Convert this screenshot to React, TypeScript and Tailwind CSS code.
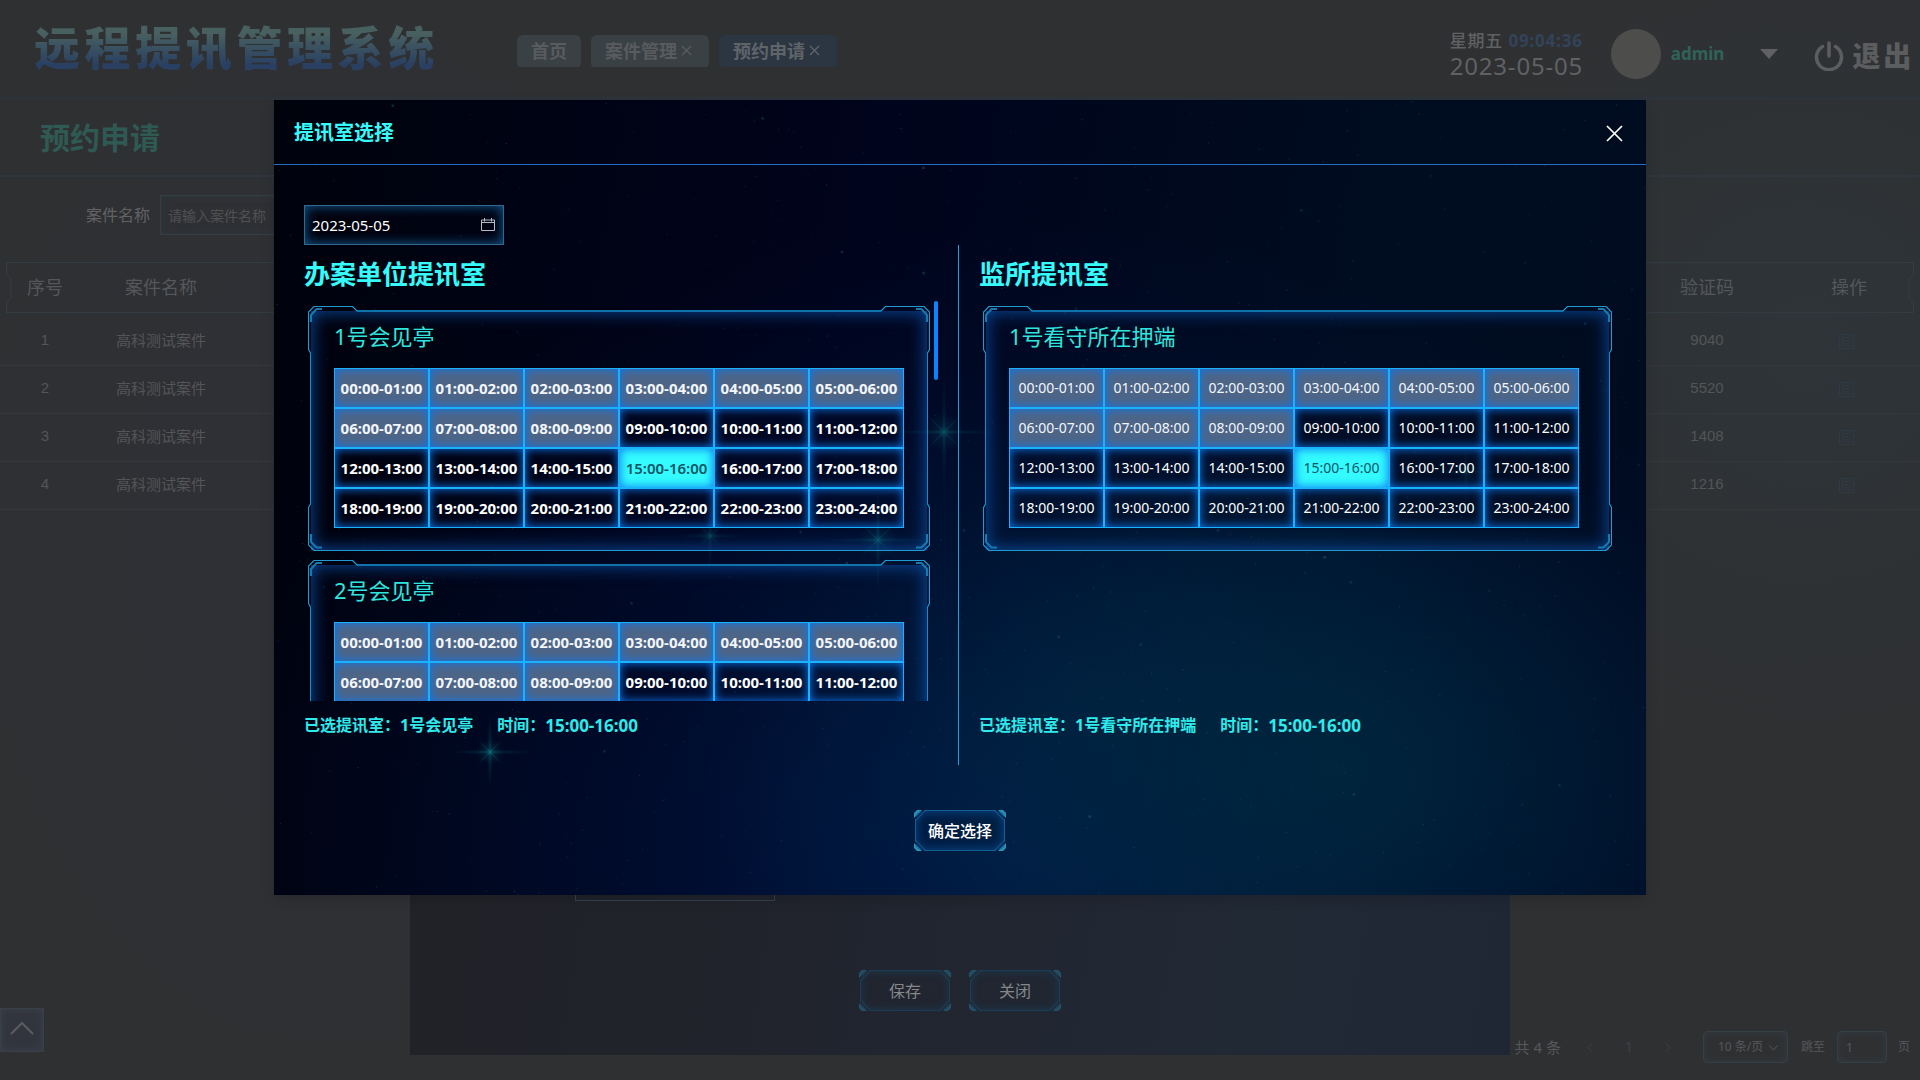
import React from "react";

const HOURS = Array.from({ length: 24 }, (_, i) => {
  const pad = (n: number) => String(n).padStart(2, "0");
  return `${pad(i)}:00-${pad(i + 1)}:00`;
});
const ROWS = [0, 6, 12, 18];

const CASES = [
  { id: 1, name: "高科测试案件", code: "9040" },
  { id: 2, name: "高科测试案件", code: "5520" },
  { id: 3, name: "高科测试案件", code: "1408" },
  { id: 4, name: "高科测试案件", code: "1216" },
];

/* Deterministic pseudo-random star positions for the dialog backdrop. */
const STARS = Array.from({ length: 700 }, (_, i) => {
  const r = (k: number) => {
    const v = Math.sin(i * 12.9898 + k * 78.233) * 43758.5453;
    return v - Math.floor(v);
  };
  return { x: r(1) * 1372, y: r(2) * 795, s: r(3) > 0.95 ? 1.5 : 0.7, o: 0.08 + r(4) * 0.2 };
});

const FLARES = [
  { x: 216, y: 652, r: 40, o: 0.75 },
  { x: 670, y: 332, r: 60, o: 0.55 },
  { x: 604, y: 440, r: 56, o: 0.55 },
  { x: 436, y: 436, r: 36, o: 0.45 },
  { x: 318, y: 588, r: 16, o: 0.4 },
  { x: 1192, y: 372, r: 36, o: 0.3 },
];

function Starfield() {
  return (
    <svg
      className="pointer-events-none absolute inset-0 h-full w-full"
      viewBox="0 0 1372 795"
      preserveAspectRatio="xMidYMid slice"
      aria-hidden="true"
    >
      <defs>
        <radialGradient id="flare">
          <stop offset="0" stopColor="#1a9a9a" stopOpacity="0.8" />
          <stop offset="0.3" stopColor="#0b6a7a" stopOpacity="0.3" />
          <stop offset="1" stopColor="#0b6a7a" stopOpacity="0" />
        </radialGradient>
      </defs>
      {STARS.map((s, i) => (
        <circle key={i} cx={s.x} cy={s.y} r={s.s} fill="#2f8fa8" opacity={s.o} />
      ))}
      {FLARES.map((f, i) => (
        <g key={i} opacity={f.o} fill="url(#flare)">
          <circle cx={f.x} cy={f.y} r={f.r / 3} />
          <ellipse cx={f.x} cy={f.y} rx={f.r} ry="2.500" />
          <ellipse cx={f.x} cy={f.y} rx="2.500" ry={f.r} />
          <ellipse cx={f.x} cy={f.y} rx={f.r / 2} ry="1.500" transform={`rotate(45 ${f.x} ${f.y})`} />
          <ellipse cx={f.x} cy={f.y} rx={f.r / 2} ry="1.500" transform={`rotate(-45 ${f.x} ${f.y})`} />
        </g>
      ))}
    </svg>
  );
}

function TopCorner({ className }: { className: string }) {
  return (
    <svg className={className} width="50" height="47" viewBox="0 0 50 47" fill="none" aria-hidden="true">
      <path d="M2.5 47L0.5 43.5V6L6 0.5H44.5L49 5" stroke="#209bd2" strokeWidth="1.200" />
      <path d="M3 16V9L8.5 3H14" stroke="#1779ad" strokeWidth="2" />
    </svg>
  );
}

function BottomCorner({ className }: { className: string }) {
  return (
    <svg className={className} width="50" height="47" viewBox="0 0 50 47" fill="none" aria-hidden="true">
      <path d="M2.5 0L0.5 3.5V41L6 46.5H50" stroke="#209bd2" strokeWidth="1.200" />
      <path d="M3 30V38L8.5 43.5H14" stroke="#1779ad" strokeWidth="2" />
    </svg>
  );
}

function PanelFrame() {
  return (
    <div className="pointer-events-none absolute inset-0" aria-hidden="true">
      <div className="absolute inset-x-[3px] top-[5px] bottom-px shadow-[inset_0_0_18px_#0b50a8]" />
      <TopCorner className="absolute top-0 left-0" />
      <TopCorner className="absolute top-0 right-0 -scale-x-100" />
      <BottomCorner className="absolute bottom-0 left-0" />
      <BottomCorner className="absolute right-0 bottom-0 -scale-x-100" />
      <div className="absolute inset-x-[49px] top-1 h-0.5 bg-[#0f72ab]" />
      <div className="absolute inset-x-[49px] bottom-0 h-px bg-[#209bd2]" />
      <div className="absolute inset-y-[47px] left-0.5 w-px bg-[#1a8cc4]" />
      <div className="absolute inset-y-[47px] right-0.5 w-px bg-[#1a8cc4]" />
    </div>
  );
}

function RoomCard({ name, bold, selected }: { name: string; bold?: boolean; selected?: string }) {
  const base =
    "block h-full w-full border border-[#1ab2fb] text-center leading-none shadow-[inset_0_0_10px_#0a78f0] ";
  const size = bold ? "text-[15px] font-bold " : "text-sm ";
  return (
    <section className="relative mx-1 h-[245px] shrink-0 pl-[26px]">
      <PanelFrame />
      <h3 className="relative h-[62px] text-[22px] leading-[60px] text-[#2fe6df]">{name}</h3>
      <table className="relative w-[570px] table-fixed border-collapse">
        <tbody>
          {ROWS.map((start) => (
            <tr key={start} className="h-10">
              {HOURS.slice(start, start + 6).map((slot, i) => {
                const past = start + i < 9;
                const on = slot === selected;
                return (
                  <td key={slot} className="h-10 p-0">
                    <button
                      type="button"
                      disabled={past}
                      aria-pressed={on}
                      className={
                        base +
                        size +
                        (on
                          ? "bg-[#33fbff] text-[#0d5563] " + (bold ? "font-semibold" : "font-normal")
                          : past
                            ? "bg-[#4d6587] text-[#f2f6fb]"
                            : "bg-transparent text-white")
                      }
                    >
                      {slot}
                    </button>
                  </td>
                );
              })}
            </tr>
          ))}
        </tbody>
      </table>
    </section>
  );
}

function FrameButton({ label, dim }: { label: string; dim?: boolean }) {
  return (
    <button
      type="button"
      className={
        "relative h-[41px] w-[92px] text-base leading-none " +
        (dim ? "text-[#858789]" : "font-medium text-white")
      }
    >
      <span
        className={
          "absolute inset-x-0.5 inset-y-px rounded-lg " +
          (dim ? "shadow-[inset_0_0_10px_#1d3a50]" : "shadow-[inset_0_0_12px_#0a4a90]")
        }
      />
      <svg
        className={"absolute inset-0 " + (dim ? "opacity-40" : "")}
        width="92"
        height="41"
        viewBox="0 0 92 41"
        fill="none"
        aria-hidden="true"
      >
        <path d="M10 0.5H82M10 40.5H82M1.5 9V32M90.5 9V32" stroke="#11608f" />
        <path
          d="M2 10.500L11 1M81 1L90 10.500M2 30.500L11 40M81 40L90 30.500"
          stroke="#155f8a"
        />
        <path
          d="M0 8V3L3 0H8ZM92 8V3L89 0H84ZM0 33V38L3 41H8ZM92 33V38L89 41H84Z"
          fill="#2b93b8"
        />
        <path d="M1.500 5L5 1.500M90.500 5L87 1.500M1.500 36L5 39.500M90.500 36L87 39.500" stroke="#125a80" strokeWidth="0.800" />
      </svg>
      <span className="relative">{label}</span>
    </button>
  );
}

function Tab({ label, active, closable }: { label: string; active?: boolean; closable?: boolean }) {
  return (
    <div
      className={
        "flex h-8 items-center rounded-t-md rounded-b-sm pl-3.5 text-lg leading-none font-semibold " +
        (active ? "bg-[#2c3643] text-[#5f6468] " : "bg-[#3a4145] text-[#595c5e] ") +
        (closable ? "pr-[17px]" : "pr-3.5")
      }
    >
      <a href="#" className="whitespace-nowrap">
        {label}
      </a>
      {closable && (
        <button type="button" aria-label={`关闭${label}`} className="ml-1">
          <svg width="11" height="11" viewBox="0 0 11 11" stroke="currentColor" strokeWidth="1.3" fill="none">
            <path d="M1 1L10 10M10 1L1 10" />
          </svg>
        </button>
      )}
    </div>
  );
}

function TableHeadEdge({ className }: { className: string }) {
  return (
    <svg className={className} width="8" height="51" viewBox="0 0 8 51" fill="none" aria-hidden="true">
      <path d="M8 0.5H0.5V12L5 17V36L0.5 41V50.500H8" stroke="#333d45" />
    </svg>
  );
}

function DetailIcon() {
  return (
    <svg width="15" height="15" viewBox="0 0 15 15" fill="none" stroke="#2d3b47" aria-hidden="true">
      <path d="M0.500 0.500H14.500V14.500H0.500ZM3.500 2V12M3.500 3.500H10M3.500 6.500H9M6 9.500H11M3.500 11.500H12" />
    </svg>
  );
}

function BackgroundPage() {
  return (
    <div className="flex min-h-screen flex-col">
      <header className="flex h-[100px] items-center border-b-[3px] border-[#2d333b] pr-1.5 pl-[34px]">
        <h1 className="w-[420px] shrink-0 bg-gradient-to-b from-[#48605f] from-20% to-[#2a4062] to-80% bg-clip-text pb-1 text-[46px] leading-[48px] font-black tracking-widest whitespace-nowrap text-transparent">
          远程提讯管理系统
        </h1>
        <nav className="ml-[63px] flex gap-2.5 pt-1">
          <Tab label="首页" />
          <Tab label="案件管理" closable />
          <Tab label="预约申请" closable active />
        </nav>
        <div className="ml-auto flex items-center pt-2.5">
          <div className="mr-[29px] w-[132px] tracking-wider whitespace-nowrap text-[#606163]">
            <p className="text-[17px] leading-6">
              <span className="font-medium">星期五</span>{" "}
              <time className="font-bold text-[#33435a]">09:04:36</time>
            </p>
            <p className="text-2xl leading-[26px]">2023-05-05</p>
          </div>
          <div className="size-[50px] rounded-full bg-[#4d4d4c]" />
          <button type="button" className="ml-2.5 flex items-center text-[17px] font-bold text-[#2f6359]">
            admin
            <svg className="ml-9" width="18" height="10" viewBox="0 0 18 10" fill="#606163" aria-hidden="true">
              <path d="M0 0H18L9 10Z" />
            </svg>
          </button>
          <button
            type="button"
            className="ml-9 flex items-center gap-2 pt-1 text-[28px] leading-8 font-black tracking-widest text-[#5c5d5f]"
          >
            <svg
              width="30"
              height="30"
              viewBox="0 0 30 30"
              fill="none"
              stroke="currentColor"
              strokeWidth="3.500"
              strokeLinecap="round"
              aria-hidden="true"
            >
              <path d="M15 2V15M8.500 5.500A12.500 12.500 0 1 0 21.500 5.500" />
            </svg>
            退出
          </button>
        </div>
      </header>

      <div className="flex h-[77px] items-center border-b-2 border-[#30363d] pl-10">
        <h2 className="text-[30px] font-bold text-[#2f5a54]">预约申请</h2>
      </div>

      <main className="flex flex-1 flex-col">
        <div className="flex items-center pt-[18px] pl-[86px]">
          <label htmlFor="case-name" className="mr-2.5 text-base text-[#616264]">
            案件名称
          </label>
          <input
            id="case-name"
            placeholder="请输入案件名称"
            className="h-10 w-[200px] border border-[#353f43] bg-transparent px-[7px] text-sm shadow-[inset_0_0_10px_#2e373d] placeholder:text-[#505153]"
          />
        </div>

        <div className="relative mt-[27px]">
          <div className="absolute inset-x-1.5 top-0 flex h-[51px]" aria-hidden="true">
            <TableHeadEdge className="shrink-0" />
            <div className="flex-1 border-y border-[#323a42]" />
            <TableHeadEdge className="shrink-0 -scale-x-100" />
          </div>
          <table className="relative w-full table-fixed border-collapse text-center text-[15px] leading-5 text-[#545557]">
            <colgroup>
              <col className="w-[90px]" />
              <col className="w-[142px]" />
              <col />
              <col className="w-[142px]" />
              <col className="w-[142px]" />
            </colgroup>
            <thead>
              <tr className="h-[55px] text-lg text-[#55575a]">
                <th className="pb-1.5 font-normal">序号</th>
                <th className="pb-1.5 font-normal">案件名称</th>
                <th />
                <th className="pb-1.5 font-normal">验证码</th>
                <th className="pb-1.5 font-normal">操作</th>
              </tr>
            </thead>
            <tbody>
              {CASES.map((c) => (
                <tr key={c.id} className="h-12 border-b border-[#35383b]">
                  <td className="pb-0.5 font-['Liberation_Sans']">{c.id}</td>
                  <td className="pb-0.5">{c.name}</td>
                  <td />
                  <td className="pb-0.5 font-['Liberation_Sans']">{c.code}</td>
                  <td className="pb-0.5">
                    <button type="button" aria-label="查看" className="mr-1.5 align-middle">
                      <DetailIcon />
                    </button>
                  </td>
                </tr>
              ))}
            </tbody>
          </table>
        </div>

        <footer className="mt-auto flex items-center justify-end pr-2.5 pb-[17px] text-xs text-[#56585a]">
          <span className="text-[15px]">共 4 条</span>
          <button type="button" aria-label="上一页" className="ml-[26px] text-[#3c4146]">
            <svg width="6" height="9" viewBox="0 0 6 9" fill="none" stroke="currentColor">
              <path d="M5 0.500L1 4.500L5 8.500" />
            </svg>
          </button>
          <button type="button" className="mx-8 text-sm text-[#3c444a]">
            1
          </button>
          <button type="button" aria-label="下一页" className="text-[#3c4146]">
            <svg width="6" height="9" viewBox="0 0 6 9" fill="none" stroke="currentColor">
              <path d="M1 0.500L5 4.500L1 8.500" />
            </svg>
          </button>
          <span className="relative ml-8 block">
            <select
              aria-label="每页条数"
              className="block h-8 w-[85px] appearance-none rounded border border-[#343f46] bg-transparent pl-3.5 text-xs shadow-[inset_0_0_8px_#343c44]"
            >
              <option>10 条/页</option>
            </select>
            <svg
              className="pointer-events-none absolute top-3.5 right-2.5"
              width="9"
              height="6"
              viewBox="0 0 9 6"
              fill="none"
              stroke="#56585a"
              aria-hidden="true"
            >
              <path d="M0.500 0.500L4.500 5L8.500 0.500" />
            </svg>
          </span>
          <label htmlFor="jump" className="mr-3 ml-[13px]">
            跳至
          </label>
          <input
            id="jump"
            defaultValue="1"
            className="h-8 w-[50px] rounded border border-[#343f46] bg-transparent px-2 text-xs shadow-[inset_0_0_8px_#343c44]"
          />
          <span className="ml-[11px]">页</span>
        </footer>
      </main>
    </div>
  );
}

function EditDialog() {
  return (
    <div className="absolute inset-x-0 top-0 flex justify-center pt-[800px]">
      <div className="w-full max-w-[1100px] bg-[linear-gradient(100deg,#212227_0%,#21232c_30%,#212935_75%,#1f2735_100%)] pt-[61px] pb-11">
        <input
          aria-label="提讯室"
          className="ml-[165px] block h-10 w-[200px] border border-[#33414f] bg-transparent"
        />
        <div className="mt-[69px] flex justify-center gap-[18px]">
          <FrameButton label="保存" dim />
          <FrameButton label="关闭" dim />
        </div>
      </div>
    </div>
  );
}

function Summary({ room }: { room: string }) {
  return (
    <p className="flex h-12 items-center text-base leading-none font-bold whitespace-nowrap text-[#2feaea]">
      <span>已选提讯室：{room}</span>
      <span className="ml-6">时间：</span>
      <span className="text-[17px]">15:00-16:00</span>
    </p>
  );
}

function RoomDialog() {
  return (
    <div className="absolute inset-x-0 top-0 flex justify-center pt-[100px]">
      <div
        role="dialog"
        aria-labelledby="dialog-title"
        className="relative w-full max-w-[1372px] bg-[#00030f] bg-[radial-gradient(ellipse_32%_42%_at_78%_84%,#002c40b0_0%,#002c4000_100%),radial-gradient(ellipse_30%_45%_at_60%_80%,#00284490_0%,#00284400_100%),radial-gradient(ellipse_60%_80%_at_55%_95%,#001846_0%,#00123c80_50%,#00103000_100%),linear-gradient(100deg,#00020c_0%,#00041c_40%,#000c20_75%,#000b20_100%)] shadow-[0_4px_12px_rgba(0,0,0,0.15)]"
      >
        <Starfield />
        <div className="relative flex h-[65px] items-center justify-between border-b border-[#1f6fc8] pt-0.5 pr-[19px] pl-5">
          <h2 id="dialog-title" className="text-xl font-bold text-[#36fbfb]">
            提讯室选择
          </h2>
          <button type="button" aria-label="关闭" className="p-1 text-white">
            <svg width="17" height="17" viewBox="0 0 17 17" fill="none" stroke="currentColor" strokeWidth="1.700">
              <path d="M1 1L16 16M16 1L1 16" />
            </svg>
          </button>
        </div>

        <div className="relative pt-10 pr-8 pb-11 pl-[30px]">
          <div className="relative w-[200px]">
            <input
              aria-label="日期"
              defaultValue="2023-05-05"
              className="block h-10 w-full border border-[#31688f] bg-transparent pl-[7px] text-[15px] text-white shadow-[inset_0_0_12px_#165e96]"
            />
            <svg
              className="pointer-events-none absolute top-[13px] right-[9px]"
              width="14"
              height="13"
              viewBox="0 0 14 13"
              fill="none"
              stroke="#b9bcc4"
              aria-hidden="true"
            >
              <path d="M0.500 2H13.500V12.500H0.500ZM0.500 4.500H13.500M3.500 0V3.500M10.500 0V3.500" />
            </svg>
          </div>

          <div className="grid grid-cols-2">
            <div className="min-w-0 border-r border-[#2f9bd0] pr-5 pb-4">
              <h3 className="h-14 text-[26px] leading-[58px] font-bold text-[#36fbfb]">办案单位提讯室</h3>
              <div className="flex h-[400px]">
                <div className="flex min-w-0 flex-1 flex-col gap-[9px] overflow-y-auto pt-[5px] [scrollbar-width:none]">
                  <RoomCard name="1号会见亭" bold selected="15:00-16:00" />
                  <RoomCard name="2号会见亭" bold />
                </div>
                <div className="w-1">
                  <div className="h-[79px] w-1 rounded-full bg-[#0a84ff]" />
                </div>
              </div>
              <Summary room="1号会见亭" />
            </div>
            <div className="-mr-0.5 min-w-0 pb-4 pl-5">
              <h3 className="h-14 text-[26px] leading-[58px] font-bold text-[#36fbfb]">监所提讯室</h3>
              <div className="h-[400px] pt-[5px]">
                <RoomCard name="1号看守所在押端" selected="15:00-16:00" />
              </div>
              <Summary room="1号看守所在押端" />
            </div>
          </div>

          <div className="mt-[45px] -mr-0.5 flex justify-center">
            <FrameButton label="确定选择" />
          </div>
        </div>
      </div>
    </div>
  );
}

export default function App() {
  return (
    <div className="relative min-h-screen overflow-hidden bg-[#2f3032] bg-[radial-gradient(ellipse_22%_40%_at_94%_32%,#2e3438_0%,#2e343800_100%),radial-gradient(ellipse_20%_50%_at_18%_50%,#2f3037_0%,#2f303700_100%)] font-['Noto_Sans','Noto_Sans_CJK_SC',sans-serif]">
      <BackgroundPage />
      <button
        type="button"
        aria-label="返回顶部"
        className="absolute bottom-7 left-0 flex size-11 items-center justify-center border border-[#3a404a] bg-[#32353d] pb-1 shadow-[inset_0_0_10px_#3a404c]"
      >
        <svg width="24" height="13" viewBox="0 0 24 13" fill="none" stroke="#5c5d61" strokeWidth="2" aria-hidden="true">
          <path d="M1 12L12 1L23 12" />
        </svg>
      </button>
      <EditDialog />
      <RoomDialog />
    </div>
  );
}
